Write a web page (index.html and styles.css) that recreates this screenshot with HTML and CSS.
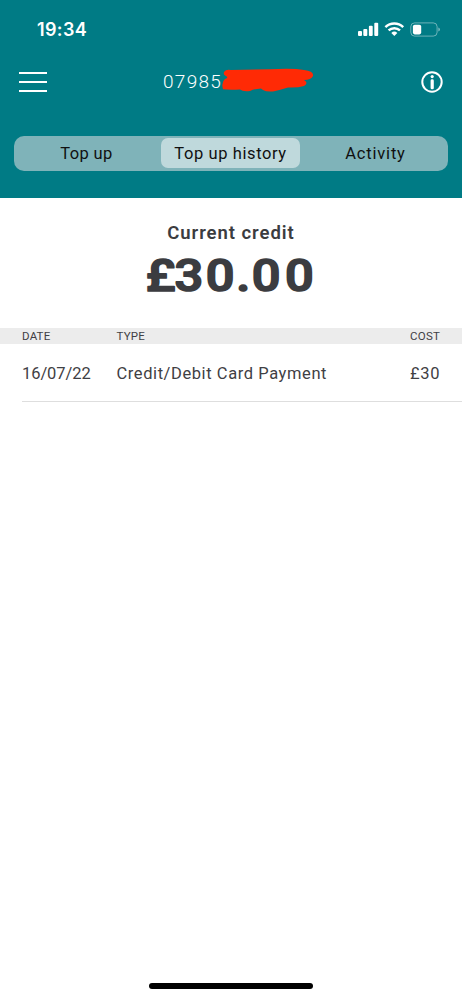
FILE: index.html
```
<!DOCTYPE html>
<html lang="en">
<head>
<meta charset="utf-8">
<meta name="viewport" content="width=device-width, initial-scale=1">
<title>Top up history</title>
<link rel="stylesheet" href="styles.css">
</head>
<body>
<div class="screen">
  <header class="header">
    <div class="status">
      <span class="time">19:34</span>
      <svg class="status-icons" width="84" height="18" viewBox="0 0 84 18" fill="#fff">
        <rect x="2" y="10" width="4" height="5" rx="1"/>
        <rect x="7.3" y="8" width="4" height="7" rx="1"/>
        <rect x="12.9" y="4.7" width="3.8" height="10.3" rx="1"/>
        <rect x="18.3" y="1.7" width="3.9" height="13.3" rx="1"/>
        <g fill="none" stroke="#fff" stroke-width="2.5">
          <path d="M29.4 6.1a13 13 0 0 1 17.8 0"/>
          <path d="M32.6 9.4a8.3 8.3 0 0 1 11.4 0"/>
        </g>
        <path d="M35.3 12a4.4 4.4 0 0 1 6 0L38.3 15.1z"/>
        <rect x="54.8" y="1.9" width="26.3" height="13.2" rx="3.8" fill="none" stroke="#fff" stroke-opacity=".42"/>
        <rect x="56.9" y="3.8" width="8.3" height="9.6" rx="1.8"/>
        <path d="M82.4 6.4q1.5.5 1.5 2.1t-1.5 2.1z" fill-opacity=".5"/>
      </svg>
    </div>
    <nav class="bar">
      <div class="menu"><i></i><i></i><i></i></div>
      <div class="number">07985
        <svg class="scribble" width="94" height="26" viewBox="221 67 94 26">
          <path fill="#ff2a05" d="M224 72Q226 69 231 70L270 69.3Q293 68 304 70Q314 71 313 76Q311 80 304 80Q309 83 304 86Q297 88 288 87.5Q280 90 273 91.5Q266 92 263 90L261 88.5Q254 89 250 91Q243 92 240 89.5Q228 90 223 89.3Q221 82 225 79Q229 78 226 76Q223 75 224 72Z"/>
        </svg>
      </div>
      <svg class="info" width="22" height="22" viewBox="0 0 22 22">
        <circle cx="11" cy="11" r="9.7" fill="none" stroke="#fff" stroke-width="2"/>
        <circle cx="11.2" cy="5.6" r="1.6" fill="#fff"/>
        <rect x="9.6" y="8.3" width="3.2" height="10" rx="1.4" fill="#fff"/>
      </svg>
    </nav>
    <div class="tabs">
      <span class="tab t1">Top up</span>
      <span class="tab t2 selected">Top up history</span>
      <span class="tab t3">Activity</span>
    </div>
  </header>
  <section class="credit">
    <h1>Current credit</h1>
    <svg class="amount" width="184" height="60" viewBox="0 0 184 60">
      <text transform="scale(1.15 1)" x="5.8 30.8 58 84.6 98 127" y="44.5">£30.00</text>
    </svg>
  </section>
  <div class="row head"><span>DATE</span><span>TYPE</span><span class="cost">COST</span></div>
  <div class="row entry"><span class="date">16/07/22</span><span class="type">Credit/Debit Card Payment</span><span class="cost">£30</span></div>
  <div class="rule"></div>
  <div class="home"></div>
</div>
</body>
</html>
```
FILE: styles.css
```
* { box-sizing: border-box; }
body { margin: 0; font-family: Roboto, sans-serif; background: #fff; }
.screen { width: 462px; height: 999px; display: flex; flex-direction: column; }
.header { height: 197.6px; background: #007b85; color: #fff; flex: none; }
.status { height: 60px; padding: 20px 22px 0 37px; display: flex; justify-content: space-between; }
.time { font: 600 18px/20px Inter, sans-serif; letter-spacing: .35px; }
.status-icons { margin-top: 1px; }
.bar { height: 44px; padding: 0 19px; display: flex; align-items: center; }
.menu { width: 28px; height: 21px; display: flex; flex-direction: column; justify-content: space-between; }
.menu i { height: 2.4px; background: #fff; }
.number { position: relative; margin-left: 116px; font-weight: 300; font-size: 19px; line-height: 24px; letter-spacing: 1.3px; width: 152px; }
.scribble { position: absolute; left: 58px; top: -3px; }
.info { margin-left: auto; }
.tabs { margin: 32px 14px 0; height: 34.5px; border-radius: 10px; background: #7fb3b9; display: flex; align-items: center; padding: 0 2px; color: #101010; }
.tab { height: 30px; line-height: 31px; text-align: center; font-size: 16.5px; letter-spacing: .6px; border-radius: 7px; }
.t1 { width: 145px; padding-right: 4px; letter-spacing: .4px; }
.t2 { width: 139px; }
.t3 { width: 146px; padding-left: 5px; letter-spacing: .8px; }
.selected { background: #bfd9dc; }
.credit { height: 130.4px; padding-top: 24px; display: flex; flex-direction: column; align-items: center; color: #3b3c40; }
h1 { margin: 0; font-size: 18.5px; line-height: 23px; font-weight: 600; letter-spacing: .95px; }
.amount { margin-top: 2px; flex: none; }
.amount text { font-family: Roboto, sans-serif; font-weight: 500; font-size: 44px; fill: #3b3c40; stroke: #3b3c40; stroke-width: 1.7px; stroke-linejoin: round; }
.row { display: grid; grid-template-columns: 94.5px 1fr auto; padding: 0 22px; color: #3f4044; }
.head { height: 16.5px; background: #ececec; font-size: 11.5px; line-height: 17px; letter-spacing: .2px; }
.entry { height: 56.5px; font-size: 16.5px; line-height: 59px; letter-spacing: .58px; }
.date { letter-spacing: -.08px; }
.rule { height: 1px; margin-left: 22px; background: #dedede; }
.home { width: 164px; height: 6px; margin: auto auto 10px 149px; border-radius: 3px; background: #000; }
```
